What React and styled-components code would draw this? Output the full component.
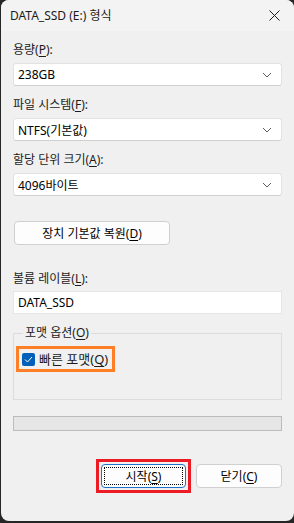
import React from "react";
import styled, { createGlobalStyle } from "styled-components";

const GlobalStyle = createGlobalStyle`
  html, body {
    margin: 0;
    padding: 0;
    background: #262626;
  }
  body {
    font-family: "Noto Sans", "Noto Sans CJK KR", sans-serif;
    font-size: 12px;
    color: #1b1b1b;
  }
`;

const Window = styled.div`
  width: 293px;
  height: 521px;
  margin-left: 1px;
  background: #f0f0f0;
  border-radius: 8px;
  overflow: hidden;
  display: flex;
  flex-direction: column;
`;

const TitleBar = styled.div`
  height: 31px;
  flex: none;
  background: #f3f3f3;
  display: flex;
  align-items: center;
  justify-content: space-between;
  padding: 0 10px 0 9px;
`;

const Title = styled.span`
  font-size: 12px;
  line-height: 16px;
  color: #1b1b1b;
`;

const Close = styled.span`
  width: 20px;
  height: 20px;
  display: flex;
  align-items: center;
  justify-content: center;
`;

const Body = styled.div`
  flex: 1;
  display: flex;
  flex-direction: column;
  padding: 11px 12px 0 12px;
`;

const Field = styled.div`
  display: flex;
  flex-direction: column;
  gap: ${(p) => p.$gap || 5}px;
  margin-top: ${(p) => p.$before || 0}px;
  margin-bottom: ${(p) => p.$after || 0}px;
`;

const Label = styled.label`
  line-height: 16px;
  white-space: nowrap;
`;

const U = styled.span`
  text-decoration: underline;
  text-underline-offset: 2px;
`;

const Select = styled.div`
  height: 23px;
  box-sizing: border-box;
  background: #fff;
  border: 1px solid #e2e2e2;
  border-bottom-color: #d0d0d0;
  border-radius: 3px;
  display: flex;
  align-items: center;
  justify-content: space-between;
  padding: 0 9px 0 4px;
  color: #000;
`;

const TextBox = styled(Select)`
  border-radius: 0;
  border-color: #e6e6e6;
`;

const Button = styled.button`
  font: inherit;
  color: #000;
  height: 24px;
  width: ${(p) => p.$w}px;
  margin-left: ${(p) => p.$indent || 0}px;
  box-sizing: border-box;
  background: #fdfdfd;
  border: 1px solid ${(p) => (p.$focus ? "#1a73c8" : "#d0d0d0")};
  border-radius: 4px;
  padding: 0;
  position: relative;
  display: flex;
  align-items: center;
  justify-content: center;
`;

const FocusRing = styled.span`
  position: absolute;
  inset: 2px;
  border: 1px dotted #000;
  pointer-events: none;
`;

const Group = styled.fieldset`
  margin: 11px 0 0 0;
  padding: 5px 2px 0 2px;
  height: 75px;
  box-sizing: border-box;
  border: 1px solid #dcdcdc;
  border-radius: 0;
`;

const Legend = styled.legend`
  padding: 0 2px;
  margin-left: 7px;
  line-height: 16px;
`;

const CheckRow = styled.div`
  display: inline-flex;
  align-items: center;
  gap: 4px;
  height: 20px;
  padding: 0 4px 0 3px;
  border: 3px solid #ff7f27;
`;

const Check = styled.span`
  width: 13px;
  height: 13px;
  border-radius: 2px;
  background: #005fb8;
  display: flex;
  align-items: center;
  justify-content: center;
`;

const CheckText = styled.span`
  font-size: 13px;
  line-height: 16px;
`;

const Progress = styled.div`
  height: 15px;
  box-sizing: border-box;
  background: #e6e6e6;
  border: 1px solid #bcbcbc;
  margin-top: 16px;
`;

const Footer = styled.div`
  display: flex;
  justify-content: flex-end;
  align-items: center;
  gap: 5px;
  margin-top: 28px;
`;

const Highlight = styled.div`
  border: 3px solid #ed1c24;
  padding: 2px;
  display: flex;
`;

const Chevron = () => (
  <svg width="10" height="6" viewBox="0 0 10 6">
    <path d="M1 1 L5 5 L9 1" fill="none" stroke="#5f5f5f" strokeWidth="1" />
  </svg>
);

export default function App() {
  return (
    <>
      <GlobalStyle />
      <Window>
        <TitleBar>
          <Title>DATA_SSD (E:) 형식</Title>
          <Close>
            <svg width="11" height="11" viewBox="0 0 11 11">
              <path d="M0.5 0.5 L10.5 10.5 M10.5 0.5 L0.5 10.5" stroke="#1b1b1b" strokeWidth="1" />
            </svg>
          </Close>
        </TitleBar>
        <Body>
          <Field $after={11}>
            <Label>
              용량(<U>P</U>):
            </Label>
            <Select>
              238GB <Chevron />
            </Select>
          </Field>
          <Field $after={11}>
            <Label>
              파일 시스템(<U>F</U>):
            </Label>
            <Select>
              NTFS(기본값) <Chevron />
            </Select>
          </Field>
          <Field $after={25}>
            <Label>
              할당 단위 크기(<U>A</U>):
            </Label>
            <Select>
              4096바이트 <Chevron />
            </Select>
          </Field>
          <Button $w={156} $indent={1}>
            장치 기본값 복원(<U>D</U>)
          </Button>
          <Field $gap={4} $before={26}>
            <Label>
              볼륨 레이블(<U>L</U>):
            </Label>
            <TextBox>DATA_SSD</TextBox>
          </Field>
          <Group>
            <Legend>
              포맷 옵션(<U>O</U>)
            </Legend>
            <CheckRow>
              <Check>
                <svg width="9" height="7" viewBox="0 0 9 7">
                  <path d="M1 3.5 L3.5 6 L8 1" fill="none" stroke="#fff" strokeWidth="1" />
                </svg>
              </Check>
              <CheckText>
                빠른 포맷(<U>Q</U>)
              </CheckText>
            </CheckRow>
          </Group>
          <Progress />
          <Footer>
            <Highlight>
              <Button $w={85} $focus>
                <FocusRing />
                시작(<U>S</U>)
              </Button>
            </Highlight>
            <Button $w={86}>
              닫기(<U>C</U>)
            </Button>
          </Footer>
        </Body>
      </Window>
    </>
  );
}
